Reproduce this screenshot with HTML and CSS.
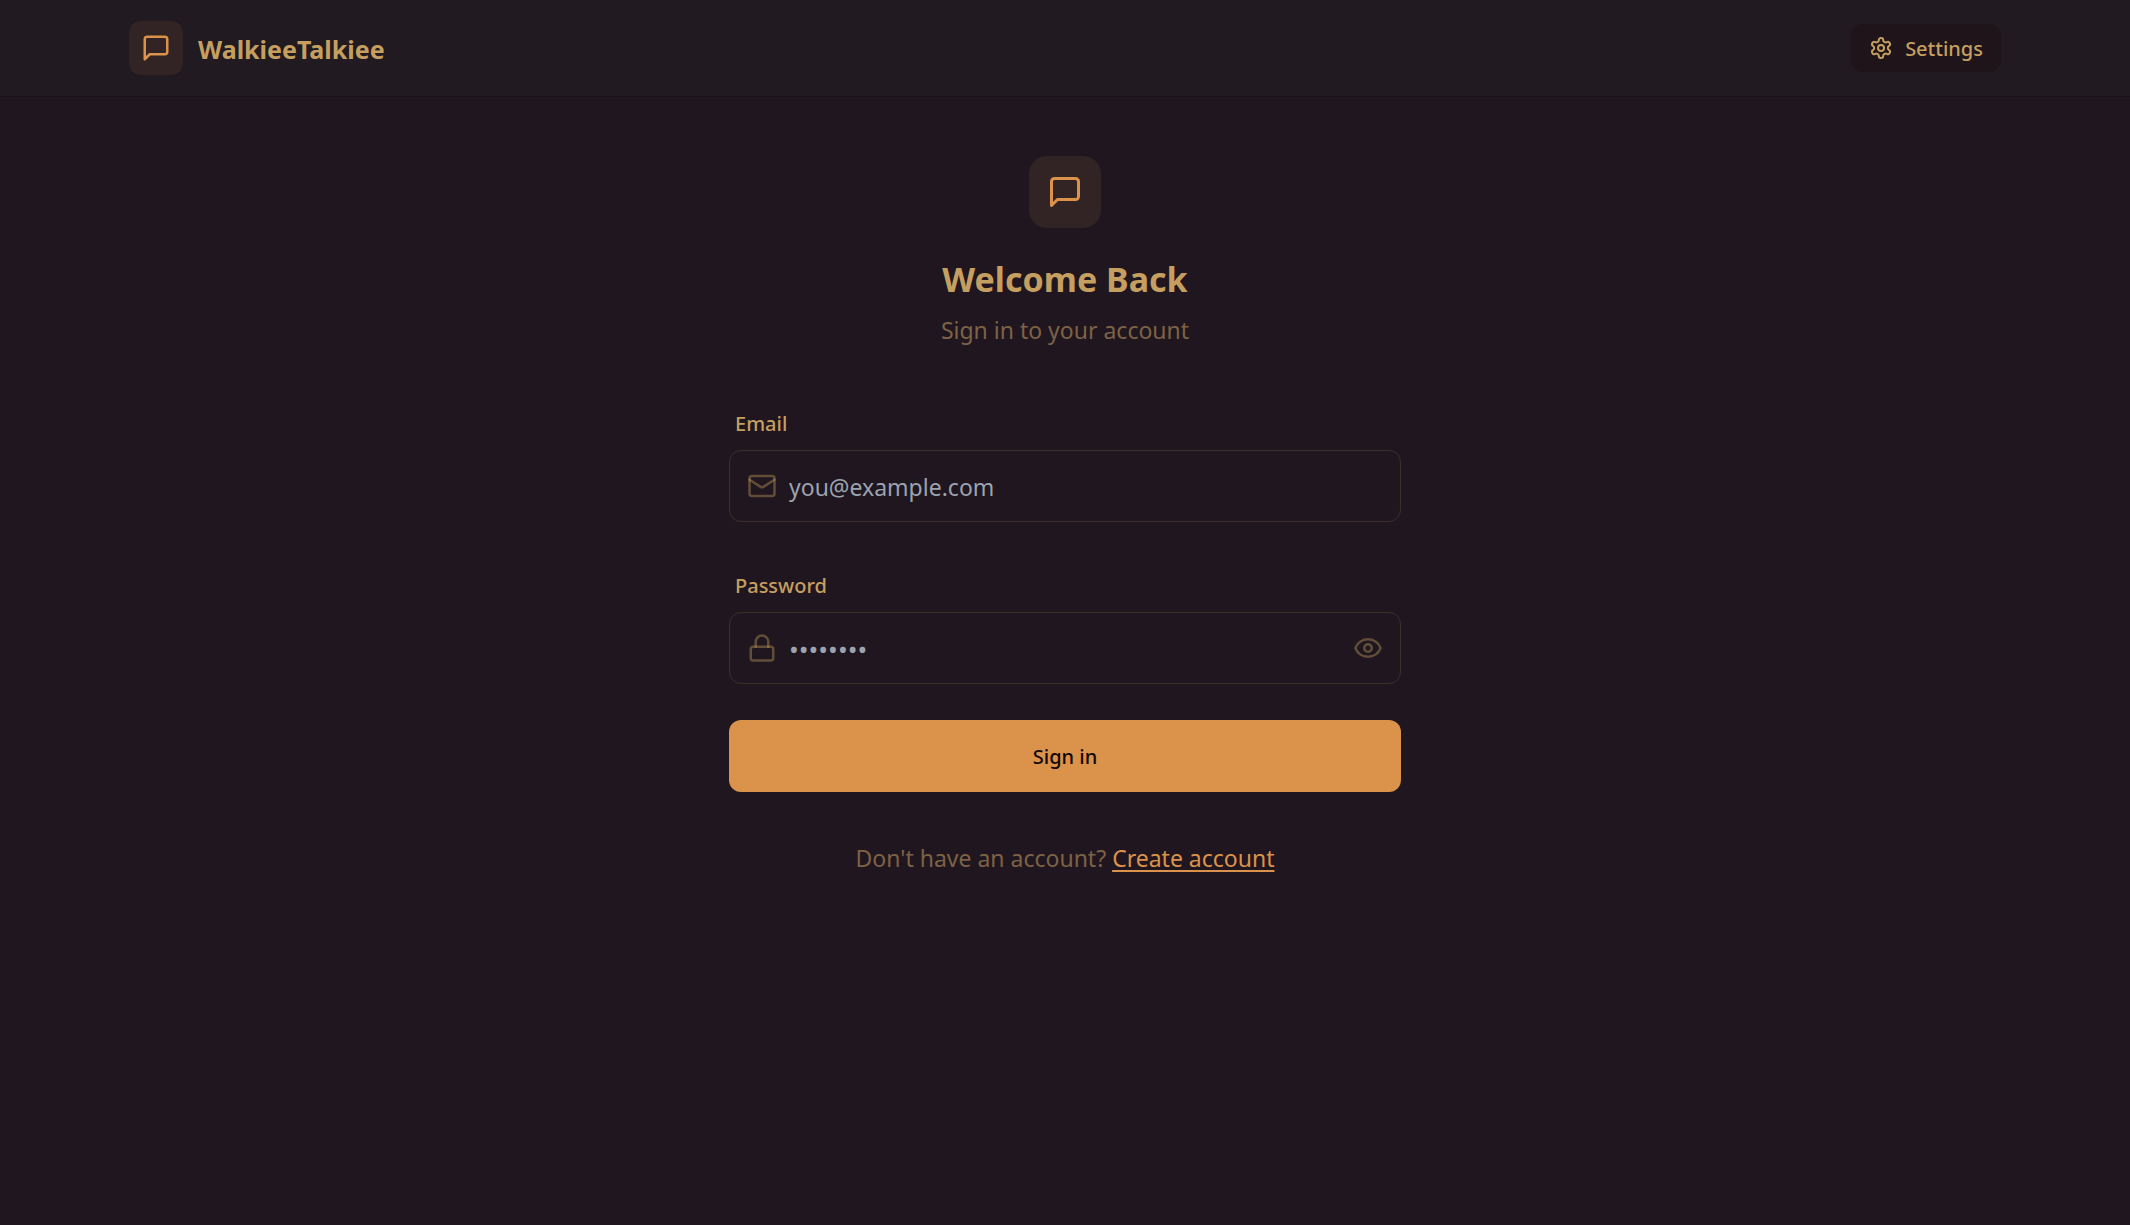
FILE: index.html
```html
<!DOCTYPE html>
<html lang="en">
<head>
<meta charset="utf-8">
<meta name="viewport" content="width=device-width, initial-scale=1">
<title>WalkieeTalkiee</title>
<link rel="stylesheet" href="styles.css">
</head>
<body>
<header class="header">
  <div class="header-inner">
    <a class="brand" href="#">
      <span class="brand-tile">
        <svg class="icon" viewBox="0 0 24 24" aria-hidden="true"><path d="M21 15a2 2 0 0 1-2 2H7l-4 4V5a2 2 0 0 1 2-2h14a2 2 0 0 1 2 2z"/></svg>
      </span>
      <span class="brand-name">WalkieeTalkiee</span>
    </a>
    <a class="settings" href="#">
      <svg class="icon icon-small" viewBox="0 0 24 24" aria-hidden="true"><path d="M12.22 2h-.44a2 2 0 0 0-2 2v.18a2 2 0 0 1-1 1.73l-.43.25a2 2 0 0 1-2 0l-.15-.08a2 2 0 0 0-2.73.73l-.22.38a2 2 0 0 0 .73 2.73l.15.1a2 2 0 0 1 1 1.72v.51a2 2 0 0 1-1 1.74l-.15.09a2 2 0 0 0-.73 2.73l.22.38a2 2 0 0 0 2.73.73l.15-.08a2 2 0 0 1 2 0l.43.25a2 2 0 0 1 1 1.73V20a2 2 0 0 0 2 2h.44a2 2 0 0 0 2-2v-.18a2 2 0 0 1 1-1.73l.43-.25a2 2 0 0 1 2 0l.15.08a2 2 0 0 0 2.73-.73l.22-.39a2 2 0 0 0-.73-2.73l-.15-.08a2 2 0 0 1-1-1.74v-.5a2 2 0 0 1 1-1.74l.15-.09a2 2 0 0 0 .73-2.73l-.22-.38a2 2 0 0 0-2.73-.73l-.15.08a2 2 0 0 1-2 0l-.43-.25a2 2 0 0 1-1-1.73V4a2 2 0 0 0-2-2z"/><circle cx="12" cy="12" r="3"/></svg>
      <span class="settings-text">Settings</span>
    </a>
  </div>
</header>

<main class="main">
  <div class="intro">
    <span class="intro-tile">
      <svg class="icon icon-large" viewBox="0 0 24 24" aria-hidden="true"><path d="M21 15a2 2 0 0 1-2 2H7l-4 4V5a2 2 0 0 1 2-2h14a2 2 0 0 1 2 2z"/></svg>
    </span>
    <h1 class="title">Welcome Back</h1>
    <p class="subtitle">Sign in to your account</p>
  </div>

  <form class="form">
    <div class="field">
      <label class="label" for="email">Email</label>
      <div class="control">
        <svg class="icon" viewBox="0 0 24 24" aria-hidden="true"><rect x="2" y="4" width="20" height="16" rx="2"/><path d="m22 7-8.97 5.7a1.94 1.94 0 0 1-2.06 0L2 7"/></svg>
        <input class="input" id="email" type="email" placeholder="you@example.com">
      </div>
    </div>
    <div class="field">
      <label class="label" for="password">Password</label>
      <div class="control">
        <svg class="icon" viewBox="0 0 24 24" aria-hidden="true"><rect x="3" y="11" width="18" height="11" rx="2"/><path d="M7 11V7a5 5 0 0 1 10 0v4"/></svg>
        <input class="input input-password" id="password" type="password" placeholder="••••••••">
        <button class="reveal" type="button" aria-label="Show password">
          <svg class="icon" viewBox="0 0 24 24" aria-hidden="true"><path d="M2.062 12.348a1 1 0 0 1 0-.696 10.75 10.75 0 0 1 19.876 0 1 1 0 0 1 0 .696 10.75 10.75 0 0 1-19.876 0"/><circle cx="12" cy="12" r="3"/></svg>
        </button>
      </div>
    </div>
    <button class="submit" type="submit">Sign in</button>
  </form>

  <p class="signup">Don't have an account? <a class="signup-link" href="#">Create account</a></p>
</main>
</body>
</html>
```
FILE: styles.css
```css
* {
  box-sizing: border-box;
}

body {
  margin: 0;
  min-height: 100vh;
  background: #20161f;
  color: #c59f60;
  font-family: "Noto Sans", sans-serif;
  font-size: 23px;
  line-height: 36px;
}

.header {
  background: #211a21;
  border-bottom: 1px solid #1b1219;
}

.header-inner {
  display: flex;
  align-items: center;
  justify-content: space-between;
  max-width: 1920px;
  height: 96px;
  margin: 0 auto;
  padding: 0 24px;
}

.brand {
  display: flex;
  align-items: center;
  gap: 15px;
  color: inherit;
  text-decoration: none;
}

.brand-tile,
.intro-tile {
  display: flex;
  align-items: center;
  justify-content: center;
  background: #322425;
  color: #db924b;
}

.brand-tile {
  width: 54px;
  height: 54px;
  border-radius: 12px;
}

.brand-name,
.settings-text,
.submit,
.input {
  padding: 2px 0 0;
}

.brand-name {
  font-size: 25px;
  font-weight: 700;
}

.icon {
  display: block;
  flex: none;
  width: 30px;
  height: 30px;
  fill: none;
  stroke: currentColor;
  stroke-width: 2;
  stroke-linecap: round;
  stroke-linejoin: round;
}

.icon-small {
  width: 24px;
  height: 24px;
}

.icon-large {
  width: 36px;
  height: 36px;
}

.settings {
  display: flex;
  align-items: center;
  gap: 12px;
  height: 48px;
  padding: 0 18px;
  border-radius: 12px;
  background: #1e141a;
  color: inherit;
  font-size: 20px;
  font-weight: 500;
  text-decoration: none;
}

.main {
  max-width: 720px;
  margin: 0 auto;
  padding: 59px 24px;
}

.intro {
  display: flex;
  flex-direction: column;
  align-items: center;
}

.intro-tile {
  width: 72px;
  height: 72px;
  border-radius: 18px;
}

.title {
  margin: 24px 0 6px;
  font-size: 34px;
  line-height: 54px;
  font-weight: 700;
}

.subtitle {
  margin: 0;
  color: #7d6245;
}

.form {
  display: flex;
  flex-direction: column;
  gap: 36px;
  margin-top: 48px;
}

.field {
  display: flex;
  flex-direction: column;
}

.label {
  height: 54px;
  padding: 10px 6px 8px;
  font-size: 20px;
  font-weight: 500;
}

.control {
  display: flex;
  align-items: center;
  gap: 12px;
  height: 72px;
  padding: 0 17px;
  border: 1px solid #3d2e2c;
  border-radius: 12px;
  color: rgb(197 159 96 / 0.4);
}

.input {
  flex: 1;
  min-width: 0;
  height: 70px;
  border: 0;
  outline: 0;
  background: none;
  color: #c59f60;
  font: inherit;
}

.input-password {
  font-size: 26px;
}

.input::placeholder {
  color: #9ca3af;
  opacity: 1;
}

.reveal {
  padding: 0;
  border: 0;
  background: none;
  color: inherit;
  cursor: pointer;
}

.submit {
  height: 72px;
  border: 0;
  border-radius: 12px;
  background: #db924b;
  color: #110802;
  font: inherit;
  font-size: 20px;
  font-weight: 500;
  cursor: pointer;
}

.signup {
  margin: 48px 0 0;
  color: #7d6245;
  text-align: center;
}

.signup-link {
  color: #db924b;
  text-decoration-thickness: 2px;
  text-underline-offset: 3px;
}
```
